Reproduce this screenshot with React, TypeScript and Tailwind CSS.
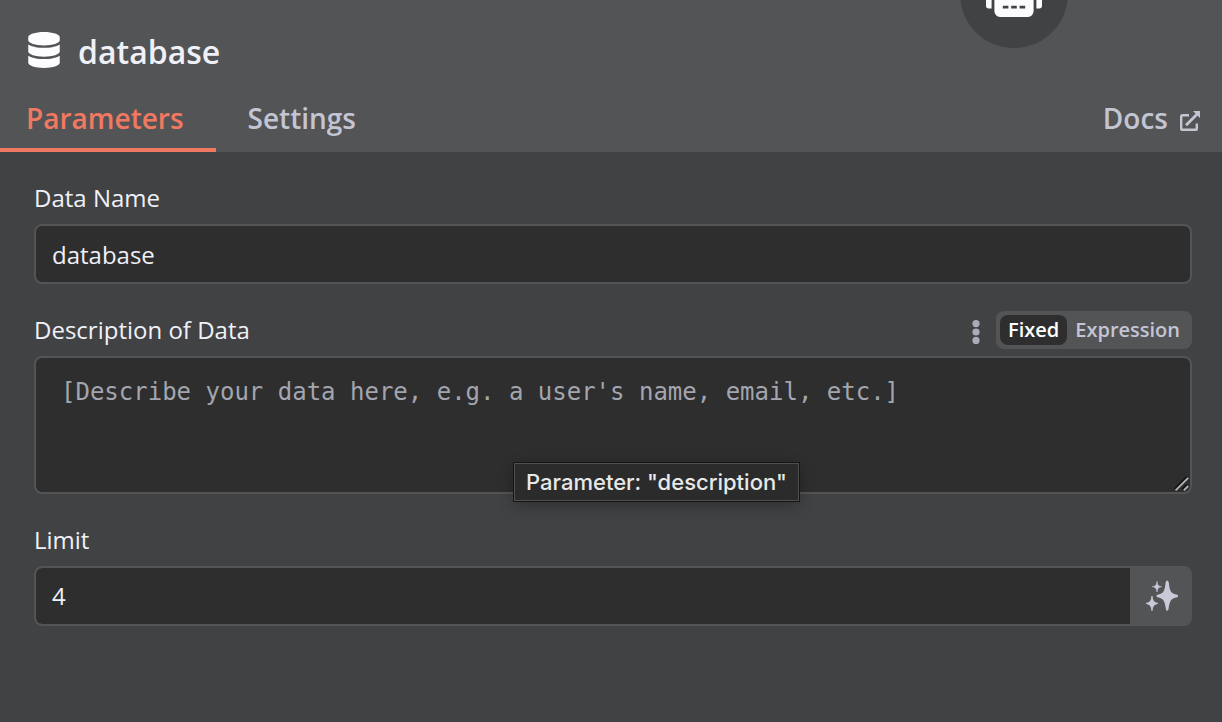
import { FaDatabase, FaRobot } from "react-icons/fa";

function ExternalLinkIcon() {
  return (
    <svg viewBox="0 0 20 20" className="mt-[6px] size-5" fill="none" aria-hidden="true">
      <path d="M9 4.2H2.6Q1.2 4.2 1.2 5.6V17.4Q1.2 18.8 2.6 18.8H15.4Q16.8 18.8 16.8 17.4V12.5" stroke="currentColor" strokeWidth="2.4" />
      <path d="M6 14.2L17 3.2" stroke="currentColor" strokeWidth="2.8" />
      <path d="M13 0H20V7Z" fill="currentColor" />
    </svg>
  );
}

function SparklesIcon() {
  return (
    <svg viewBox="0 0 32 32" className="size-8" fill="currentColor" aria-hidden="true">
      <path d="M21.2 0.5Q22.6 0.5 22.9 3.2C23.7 11.2 24.8 13.4 31.2 14.8Q33 16 31.2 17.2C24.8 18.4 23.7 20.6 22.5 29.2Q21.2 32.5 19.9 29.2C18.7 20.6 17.6 18.4 11.4 17.2Q9.4 16 11.4 14.8C17.6 13.4 18.7 11.2 19.5 3.2Q19.8 0.5 21.2 0.5Z" />
      <path d="M11 1.4C11.6 5.2 12.2 6 15.6 6.7C12.2 7.4 11.6 8.2 11 12C10.4 8.2 9.8 7.4 6.4 6.7C9.8 6 10.4 5.2 11 1.4Z" stroke="currentColor" strokeWidth="0.6" />
      <path d="M6 16C6.8 21 7.8 22.3 12 23.4C7.8 24.5 6.8 25.8 6 30.8C5.2 25.8 4.2 24.5 0 23.4C4.2 22.3 5.2 21 6 16Z" stroke="currentColor" strokeWidth="0.8" />
    </svg>
  );
}

function ResizeGrip() {
  return (
    <svg viewBox="0 0 16 16" className="pointer-events-none absolute right-0.5 bottom-0.5 size-4" fill="none" aria-hidden="true">
      <path d="M1 13.4L13.4 1M9 13.4L13.4 9" stroke="#151515" strokeWidth="3.2" />
      <path d="M1.6 14.4L14.2 1.8M9.8 14.4L14.2 10" stroke="#b4b4b4" strokeWidth="1.8" />
    </svg>
  );
}

export default function App() {
  return (
    <div className="flex min-h-screen flex-col bg-[#414244] font-['Open_Sans',sans-serif] text-[#f0f0f8]">
      <header className="relative overflow-hidden bg-[#535456]">
        <div className="absolute right-[154px] -top-[60px] flex size-[108px] items-center justify-center rounded-full bg-[#414244]">
          <FaRobot className="h-[45px] w-14 text-[#fcfcff]" aria-hidden="true" />
        </div>

        <div className="flex items-center gap-[18px] px-7 pt-7">
          <FaDatabase className="-mt-1 h-9 w-8 text-[#fcfcff]" aria-hidden="true" />
          <h1 className="text-[32px] leading-[48px] font-semibold">database</h1>
        </div>

        <div className="flex items-stretch justify-between pt-3 text-[28px] leading-[38px] font-semibold text-[#c3c5d3]">
          <div role="tablist" className="flex">
            <button
              type="button"
              role="tab"
              aria-selected="true"
              className="border-b-4 border-[#f17961] pt-[11px] pr-8 pb-[11px] pl-[26px] text-[#f17961]"
            >
              Parameters
            </button>
            <button
              type="button"
              role="tab"
              aria-selected="false"
              className="border-b-4 border-transparent px-8 pt-[11px] pb-[11px]"
            >
              Settings
            </button>
          </div>
          <a href="#docs" className="flex items-center gap-3 pt-[11px] pr-[22px] pb-[15px]">
            Docs
            <ExternalLinkIcon />
          </a>
        </div>
      </header>

      <form className="flex flex-col gap-7 pt-7 pr-[30px] pb-8 pl-[34px] text-[24px] leading-9">
        <div className="flex flex-col gap-2">
          <label htmlFor="data-name">Data Name</label>
          <input
            id="data-name"
            type="text"
            defaultValue="database"
            className="h-[60px] w-full rounded-lg border-2 border-[#535456] bg-[#2e2e2e] px-4 outline-none"
          />
        </div>

        <div className="flex flex-col gap-2">
          <div className="flex h-9 items-center justify-between">
            <label htmlFor="description">Description of Data</label>
            <div className="flex items-center gap-4">
              <button type="button" aria-label="Options" className="text-[#a9acb8]">
                <svg viewBox="0 0 8 24" className="mt-1 h-6 w-2" fill="currentColor" aria-hidden="true">
                  <circle cx="4" cy="3.6" r="3.6" />
                  <circle cx="4" cy="12" r="3.6" />
                  <circle cx="4" cy="20.4" r="3.6" />
                </svg>
              </button>
              <div role="radiogroup" aria-label="Value mode" className="flex rounded-lg bg-[#535456] p-1 text-[20px] leading-[30px] font-semibold">
                <button type="button" role="radio" aria-checked="true" className="rounded-lg bg-[#2e2e2e] px-2 text-white">
                  Fixed
                </button>
                <button type="button" role="radio" aria-checked="false" className="rounded-lg px-2 text-[#c3c5d3]">
                  Expression
                </button>
              </div>
            </div>
          </div>
          <div className="relative">
            <textarea
              id="description"
              placeholder="[Describe your data here, e.g. a user's name, email, etc.]"
              className="block h-[138px] w-full resize-none rounded-lg border-2 border-[#535456] bg-[#2e2e2e] px-[25px] py-4 font-['DejaVu_Sans_Mono',monospace] text-[24px] leading-9 outline-none placeholder:text-[#a3a5af]"
            />
            <ResizeGrip />
            <div
              role="tooltip"
              className="absolute top-[107px] left-[480px] border border-[#4f4f4f] bg-[#2b2b2b] px-[11px] font-['Inter',sans-serif] text-[22px] leading-9 font-medium whitespace-nowrap text-[#e8e8e8] shadow-[0_4px_16px_rgba(0,0,0,0.3)] outline outline-[#151515]"
            >
              Parameter: "description"
            </div>
          </div>
        </div>

        <div className="flex flex-col gap-2">
          <label htmlFor="limit">Limit</label>
          <div className="flex h-[60px] overflow-hidden rounded-lg border-2 border-[#535456] bg-[#535456]">
            <input
              id="limit"
              type="text"
              inputMode="numeric"
              defaultValue="4"
              className="min-w-0 flex-1 rounded-l-md bg-[#2e2e2e] px-4 outline-none"
            />
            <button type="button" aria-label="Let the model define this parameter" className="flex w-[60px] items-center justify-center pl-1 text-[#c8cad8]">
              <SparklesIcon />
            </button>
          </div>
        </div>
      </form>
    </div>
  );
}
